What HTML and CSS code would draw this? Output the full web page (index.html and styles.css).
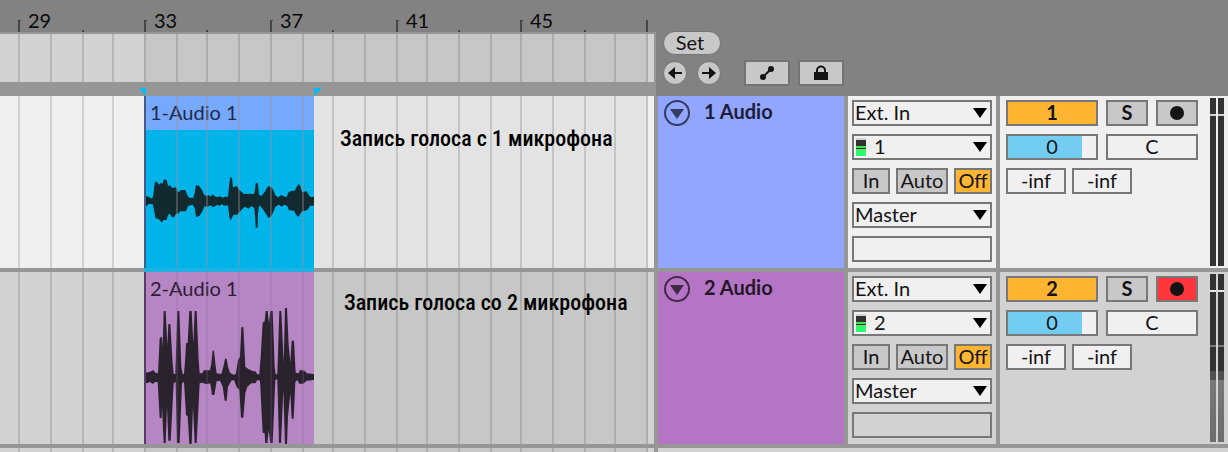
FILE: index.html
```html
<!DOCTYPE html>
<html lang="ru">
<head>
<meta charset="utf-8">
<title>Arrangement</title>
<link rel="stylesheet" href="styles.css">
</head>
<body>
<svg class="defs" aria-hidden="true">
  <defs>
    <path id="beats" d="M19 0V200M51 0V200M83 0V200M113 0V200M145 0V200M177 0V200M207 0V200M239 0V200M271 0V200M303 0V200M333 0V200M365 0V200M397 0V200M427 0V200M459 0V200M491 0V200M521 0V200M553 0V200M585 0V200M615 0V200M647 0V200" fill="none" stroke-width="2"/>
    <g id="lane-grid">
      <rect x="144" width="504" height="200" fill="#000" fill-opacity=".05"/>
      <use href="#beats" stroke="#000" stroke-opacity=".13"/>
    </g>
    <path id="arrow-down" d="M0 0H14L7 10Z"/>
  </defs>
</svg>
<div class="app">
  <header class="top">
    <div class="timeline">
      <div class="ruler">
        <svg class="grid" aria-hidden="true"><path d="M19 32V20M145 32V20M271 32V20M397 32V20M521 32V20M647 32V20M83 30V32M207 30V32M333 30V32M459 30V32M585 30V32" fill="none" stroke="#464646" stroke-width="2"/><path d="M20 20.5h1M146 20.5h1M272 20.5h1M398 20.5h1M522 20.5h1" stroke="#464646"/></svg>
        <span class="bar">29</span><span class="bar">33</span><span class="bar">37</span><span class="bar bar-short">41</span><span class="bar">45</span>
      </div>
      <div class="overview"><svg class="grid" aria-hidden="true"><use href="#lane-grid"/></svg></div>
      <div class="locators">
        <svg class="grid" aria-hidden="true"><path d="M139 6H146V14ZM314 6H322L314 14Z" fill="#00bef5"/></svg>
      </div>
    </div>
    <div class="controls">
      <button class="pill">Set</button>
      <div class="control-row">
        <button class="round" aria-label="Previous locator"><svg width="16" height="14" viewBox="0 0 16 14"><path d="M1 7 8 1V13ZM7 6H15V8H7Z" fill="#141414"/></svg></button>
        <button class="round" aria-label="Next locator"><svg width="16" height="14" viewBox="0 0 16 14"><path d="M15 7 8 1V13ZM9 6H1V8H9Z" fill="#141414"/></svg></button>
        <button class="square first" aria-label="Automation mode"><svg width="16" height="16" viewBox="0 0 16 16"><path d="M4 12 12 4" stroke="#141414" stroke-width="2"/><circle cx="4" cy="12" r="3" fill="#141414"/><circle cx="12" cy="4" r="3" fill="#141414"/></svg></button>
        <button class="square" aria-label="Lock envelopes"><svg width="14" height="16" viewBox="0 0 14 16"><path d="M3 8V5.500A4 4 0 0 1 11 5.500V8" fill="none" stroke="#141414" stroke-width="2"/><path d="M0 7H14V15H0Z" fill="#141414"/></svg></button>
      </div>
    </div>
  </header>

  <section class="track">
    <div class="lane light">
      <svg class="grid" aria-hidden="true"><use href="#lane-grid"/></svg>
      <div class="clip clip-blue">
        <div class="clip-title">1-Audio 1</div>
        <svg class="wave" viewBox="42 150 510 414" preserveAspectRatio="none" aria-hidden="true"><path fill="#102a30" d="M42 352 48 348 58 352 66 356 70 346 74 310 78 303 82 308 88 314 92 308 97 312 101 299 106 298 111 302 114 318 120 316 126 324 138 322 142 334 148 336 152 330 166 330 172 346 178 353 190 353 194 340 198 315 208 318 216 330 222 344 230 348 236 345 242 350 248 343 256 350 262 351 270 349 278 353 284 350 294 350 298 310 301 291 306 294 309 322 320 318 328 330 342 342 356 341 372 342 375 330 377 310 380 308 384 312 387 344 394 348 404 336 410 325 416 318 424 322 430 330 436 346 444 352 454 345 464 350 470 350 476 336 486 332 494 332 500 320 506 311 512 320 516 336 530 334 536 344 542 352 552 350 552 377 540 377 534 388 526 392 516 394 512 400 505 411 498 404 492 392 476 390 472 378 462 374 456 380 446 374 436 380 430 396 424 408 416 414 408 402 398 386 388 376 384 400 383 443 377 443 376 420 373 384 364 378 356 386 344 380 334 390 322 404 310 404 302 422 298 410 294 376 282 377 276 373 268 378 262 374 250 382 240 376 232 381 224 378 216 396 208 408 198 411 194 384 188 374 174 378 168 394 150 394 146 400 138 402 132 412 126 412 120 402 114 404 110 420 100 420 96 428 91 422 86 418 76 414 72 390 68 372 56 372 50 378 42 374Z"/></svg>
        <svg class="grid" viewBox="144 0 170 172" aria-hidden="true"><use href="#beats" stroke="#a08f91" stroke-opacity=".4"/><path d="M145 0V172" stroke="#485a8a" stroke-width="2"/></svg>
      </div>
      <p class="caption">Запись голоса с 1 микрофона</p>
    </div>
    <div class="name name-blue">
      <button class="fold" aria-label="Fold track 1"><svg width="14" height="10"><use href="#arrow-down"/></svg></button>
      <h2>1 Audio</h2>
    </div>
    <div class="io light">
      <label class="pick"><select aria-label="Input type"><option>Ext. In</option></select><svg width="14" height="10"><use href="#arrow-down"/></svg></label>
      <label class="pick"><span class="signal"></span><select aria-label="Input channel"><option>1</option></select><svg width="14" height="10"><use href="#arrow-down"/></svg></label>
      <div class="monitor"><button class="key">In</button><button class="key auto">Auto</button><button class="key on">Off</button></div>
      <label class="pick"><select aria-label="Output"><option>Master</option></select><svg width="14" height="10"><use href="#arrow-down"/></svg></label>
      <div class="blank"></div>
    </div>
    <div class="mixer light">
      <div class="strip">
        <button class="key on bold wide">1</button><button class="key bold">S</button><button class="key arm" aria-label="Arm"><svg width="14" height="14"><circle cx="7" cy="7" r="7" fill="#141414"/></svg></button>
        <input class="field volume" aria-label="Volume" value="0"><input class="field pan" aria-label="Pan" value="C">
        <div class="sends"><input class="field" aria-label="Send A" value="-inf"><input class="field" aria-label="Send B" value="-inf"></div>
      </div>
      <div class="meter"><i></i><i></i></div>
    </div>
  </section>

  <section class="track">
    <div class="lane mid">
      <svg class="grid" aria-hidden="true"><use href="#lane-grid"/></svg>
      <div class="clip clip-violet">
        <div class="clip-title">2-Audio 1</div>
        <svg class="wave full" viewBox="42 36 510 516" preserveAspectRatio="none" aria-hidden="true"><path fill="#2a222c" d="M42 338 56 337 64 334 70 330 76 338 84 340 89 234 96 230 98 262 101 153 107 153 112 255 115 192 121 192 128 310 131 342 136 342 142 153 148 153 154 320 158 342 162 342 166 290 168 250 173 248 178 153 185 153 190 250 194 153 200 153 206 300 209 340 216 340 222 331 240 331 244 310 248 271 252 273 256 310 260 340 274 342 280 320 285 296 290 296 294 320 300 338 312 345 318 340 324 300 330 290 334 202 340 201 346 320 356 328 370 334 376 334 382 343 388 343 392 290 398 188 404 184 407 153 413 153 417 190 421 153 428 153 434 320 437 343 442 343 448 153 454 153 461 308 465 144 471 144 476 255 481 307 485 242 492 242 497 338 506 340 510 330 524 332 530 340 552 342 552 360 530 362 520 371 508 371 502 360 496 366 491 476 485 476 481 400 474 470 471 552 465 552 460 390 453 549 447 549 442 358 436 360 428 549 421 549 416 510 412 549 406 549 404 520 398 518 390 362 382 360 376 370 364 370 352 380 346 400 340 473 333 473 328 390 320 382 312 360 304 362 294 380 290 422 284 422 278 380 270 362 260 364 253 405 246 405 241 370 230 373 216 368 209 370 200 549 194 549 189 440 185 552 178 552 173 468 168 466 162 366 156 370 149 549 141 549 137 366 131 370 122 542 115 542 111 440 107 549 101 549 96 440 95 474 89 474 83 366 76 366 68 372 60 366 50 370 42 366Z"/></svg>
        <svg class="grid" viewBox="144 0 170 172" aria-hidden="true"><use href="#beats" stroke="#806890" stroke-opacity=".2"/><path d="M145 0V172" stroke="#5c3b6b" stroke-width="2"/></svg>
      </div>
      <p class="caption caption-two">Запись голоса со 2 микрофона</p>
    </div>
    <div class="name name-violet">
      <button class="fold" aria-label="Fold track 2"><svg width="14" height="10"><use href="#arrow-down"/></svg></button>
      <h2>2 Audio</h2>
    </div>
    <div class="io mid">
      <label class="pick"><select aria-label="Input type"><option>Ext. In</option></select><svg width="14" height="10"><use href="#arrow-down"/></svg></label>
      <label class="pick"><span class="signal"></span><select aria-label="Input channel"><option>2</option></select><svg width="14" height="10"><use href="#arrow-down"/></svg></label>
      <div class="monitor"><button class="key">In</button><button class="key auto">Auto</button><button class="key on">Off</button></div>
      <label class="pick"><select aria-label="Output"><option>Master</option></select><svg width="14" height="10"><use href="#arrow-down"/></svg></label>
      <div class="blank"></div>
    </div>
    <div class="mixer mid">
      <div class="strip">
        <button class="key on bold wide">2</button><button class="key bold">S</button><button class="key arm armed" aria-label="Arm"><svg width="14" height="14"><circle cx="7" cy="7" r="7" fill="#141414"/></svg></button>
        <input class="field volume" aria-label="Volume" value="0"><input class="field pan" aria-label="Pan" value="C">
        <div class="sends"><input class="field" aria-label="Send A" value="-inf"><input class="field" aria-label="Send B" value="-inf"></div>
      </div>
      <div class="meter active"><i></i><i></i></div>
    </div>
  </section>

  <footer class="rest">
    <div class="lane mid"><svg class="grid" aria-hidden="true"><use href="#lane-grid"/></svg></div>
    <div class="rest-side mid"></div>
  </footer>
</div>
</body>
</html>
```

FILE: styles.css
```css
* { box-sizing: border-box; }

body {
  margin: 0;
  background: #969696;
  color: #141414;
  font: 20px/24px Lato, "Noto Sans", sans-serif;
}

button, select, input { font: inherit; color: inherit; margin: 0; padding: 0; }
button { display: flex; align-items: center; justify-content: center; }
svg { display: block; flex: none; }

.defs { position: absolute; width: 0; height: 0; }

.app { display: flex; flex-direction: column; height: 100vh; overflow: hidden; }

.grid { position: absolute; top: 0; left: 0; width: 100%; height: 100%; }

.light { background: #f0f0f0; }
.mid { background: #d2d2d2; }

/* Header */
.top { display: flex; background: #828282; }
.timeline { flex: 1; min-width: 0; }
.ruler {
  position: relative;
  display: flex;
  height: 32px;
  padding: 8px 0 0 28px;
  color: #0a0a0a;
  overflow: hidden;
}
.bar { width: 126px; flex: none; }
.bar-short { width: 124px; }
.overview {
  position: relative;
  height: 50px;
  border: solid #969696;
  border-width: 2px 2px 0 0;
  background: #d2d2d2;
}
.locators { position: relative; height: 14px; background: #969696; }
.controls { width: 572px; padding: 31px 0 0 7px; }
.control-row { display: flex; align-items: center; margin-top: 5px; }
.pill, .round, .square { background: #c8c8c8; border: 1px solid #747474; }
.pill { width: 58px; height: 24px; padding: 0 4px 2px 0; border-radius: 12px; }
.round { width: 24px; height: 24px; border-radius: 12px; margin-right: 10px; }
.square { width: 46px; height: 26px; border-width: 2px; margin-right: 8px; }
.first { margin-left: 13px; }

/* Tracks */
.track { display: flex; gap: 4px; height: 172px; margin-bottom: 4px; flex: none; }
.lane { position: relative; flex: 1; min-width: 0; display: flex; }
.clip { position: relative; width: 170px; margin-left: 144px; flex: none; }
.clip-blue { background: #00b4ea; height: 172px; box-shadow: 0 4px #1fb1df; }
.clip-violet { background: #b685c4; }
.clip-title { height: 34px; padding: 4px 6px; color: #222b4a; }
.clip-blue .clip-title { background: #76a8fc; }
.clip-violet .clip-title { color: #2e1d35; }
.wave { width: 170px; height: 138px; }
.full { position: absolute; top: 0; left: 0; height: 172px; }
.caption {
  margin: 29px 0 0 26px;
  color: #000;
  font: 500 22px/28px "Roboto Condensed", "Liberation Sans Narrow", "Liberation Sans", sans-serif;
  white-space: nowrap;
}
.caption-two { margin: 17px 0 0 30px; }

.name { display: flex; width: 186px; padding: 4px 6px; gap: 14px; }
.name-blue { background: #92a6ff; color: #1c2036; fill: #333b5e; }
.name-violet { background: #b475c5; color: #241728; fill: #412a48; }
.name h2 { margin: 0; font-size: 20px; line-height: 22px; }
.fold {
  width: 26px;
  height: 26px;
  padding-top: 2px;
  border: 2px solid #333b5e;
  border-radius: 13px;
  background: none;
}
.name-violet .fold { border-color: #412a48; }

.io { width: 148px; padding: 4px; display: flex; flex-direction: column; gap: 8px; }
.pick, .blank { display: flex; align-items: center; height: 26px; border: 2px solid #787878; }
.pick { background: #f0f0f0; padding: 0 3px 0 1px; }
.pick select { flex: 1; min-width: 0; height: 26px; padding-bottom: 2px; appearance: none; border: 0; background: none; }
.signal {
  width: 10px;
  height: 18px;
  margin: 0 8px 0 1px;
  background: linear-gradient(#d2d2d2 2px, #323232 2px 8px, #4be05a 8px 10px, #323232 10px 11px, #46f05a 11px, #1eff78);
}
.monitor { display: flex; gap: 6px; }
.key { width: 38px; height: 26px; padding-bottom: 2px; border: 2px solid #787878; background: #c8c8c8; }
.arm { padding-bottom: 0; }
.auto { width: 52px; }
.on { background: #ffb432; }
.armed { background: #ff373c; }
.bold { font-weight: bold; }

.mixer { flex: none; width: 228px; padding: 2px 4px 2px 6px; display: flex; justify-content: space-between; }
.strip { display: grid; grid-template-columns: 92px 42px 42px; gap: 8px; align-content: start; padding-top: 2px; }
.strip .key { width: 100%; }
.field { width: 92px; height: 26px; padding-bottom: 2px; border: 2px solid #787878; background: #f0f0f0; text-align: center; }
.volume { background: linear-gradient(90deg, #73cdf0 84%, #f0f0f0 84%) padding-box; }
.pan { grid-column: span 2; }
.sends { grid-column: span 3; display: flex; gap: 6px; }
.sends .field { width: 60px; }
.meter { display: flex; gap: 2px; }
.meter i { width: 6px; background: linear-gradient(#323232 16px, #d2d2d2 16px 18px, #323232 18px); }
.active i {
  background: linear-gradient(#323232 16px, #e6e6e6 16px 18px, #323232 18px 71px, #787878 71px 73px, #323232 73px 97px, #505050 97px 106px, #787878 106px, #6c6c6c);
}

.rest { display: flex; gap: 4px; flex: 1; }
.rest-side { width: 570px; }
```
